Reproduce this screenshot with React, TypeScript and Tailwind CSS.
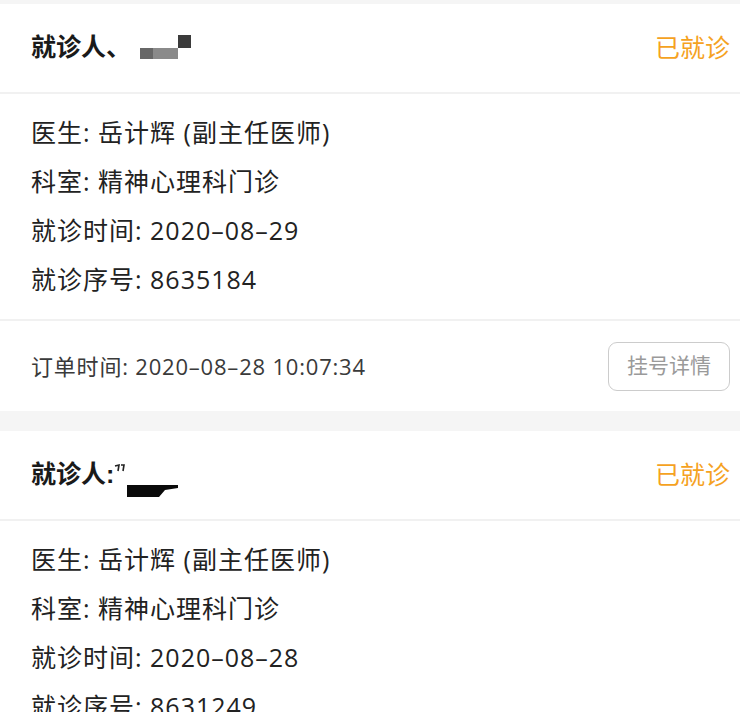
const FONT = "font-['Open_Sans','Noto_Sans_CJK_SC',sans-serif]";

type Visit = {
  id: string;
  doctor: string;
  dept: string;
  date: string;
  serial: string;
  orderTime?: string;
  blur: "mosaic" | "ink";
};

const VISITS: Visit[] = [
  {
    id: "a",
    doctor: "岳计辉 (副主任医师)",
    dept: "精神心理科门诊",
    date: "2020–08–29",
    serial: "8635184",
    orderTime: "2020–08–28 10:07:34",
    blur: "mosaic",
  },
  {
    id: "b",
    doctor: "岳计辉 (副主任医师)",
    dept: "精神心理科门诊",
    date: "2020–08–28",
    serial: "8631249",
    orderTime: "2020–08–27 09:12:05",
    blur: "ink",
  },
];

/* redacted name patches */
const Mosaic = () => (
  <svg width="52" height="25" viewBox="0 0 52 25" className="ml-[9px] mt-[-2px]">
    <rect x="38" y="0" width="13" height="13" fill="#3b3b3b" />
    <rect x="0" y="13" width="13" height="11" fill="#676767" />
    <rect x="13" y="13" width="25" height="11" fill="#8a8a8a" />
  </svg>
);

const Ink = () => (
  <svg width="66" height="36" viewBox="0 0 66 36" className="mt-[12px]">
    <path d="M1 3 L5 2 L4 8 M7 2 L10 2 L9 8" stroke="#222" strokeWidth="1.6" fill="none" />
    <path d="M13 22 L64 22 L64 25 L51 27 L45 34 L13 34 Z" fill="#0a0a0a" />
  </svg>
);

const Card = ({ v }: { v: Visit }) => (
  <section className="bg-white">
    <header className="flex h-[88px] items-center justify-between pl-[31px] pr-[10px]">
      <div className="flex items-center">
        <span className="font-['Liberation_Sans','Noto_Sans_CJK_SC',sans-serif] text-[25px] font-bold text-[#1a1a1a]">
          {v.blur === "mosaic" ? "就诊人、" : "就诊人:"}
        </span>
        {v.blur === "mosaic" ? <Mosaic /> : <Ink />}
      </div>
      <span className="text-[25px] text-[#f5a21f]">已就诊</span>
    </header>
    <div className="h-[2px] bg-[#f1f1f1]" />
    <div className="pl-[31px] pt-[14px] pb-[15px] text-[25px] leading-[49px] tracking-[1px] text-[#222]">
      <p>医生: {v.doctor}</p>
      <p>科室: {v.dept}</p>
      <p>就诊时间: {v.date}</p>
      <p>就诊序号: {v.serial}</p>
    </div>
    <div className="h-[2px] bg-[#f1f1f1]" />
    <footer className="flex h-[90px] items-center justify-between pl-[31px] pr-[10px]">
      <span className="text-[22px] tracking-[0.8px] text-[#3a3a3a]">订单时间: {v.orderTime}</span>
      <button className="flex h-[49px] w-[122px] items-center justify-center rounded-[9px] border-[1.5px] border-[#cccccc] text-[21px] text-[#9a9a9a]">
        挂号详情
      </button>
    </footer>
  </section>
);

export default function App() {
  return (
    <div className={`min-h-[712px] w-[750px] bg-white ${FONT}`}>
      <div className="w-[740px] bg-[#f5f5f5] pt-[4px]">
        <div className="flex flex-col gap-[20px]">
          {VISITS.map((v) => (
            <Card key={v.id} v={v} />
          ))}
        </div>
      </div>
    </div>
  );
}
